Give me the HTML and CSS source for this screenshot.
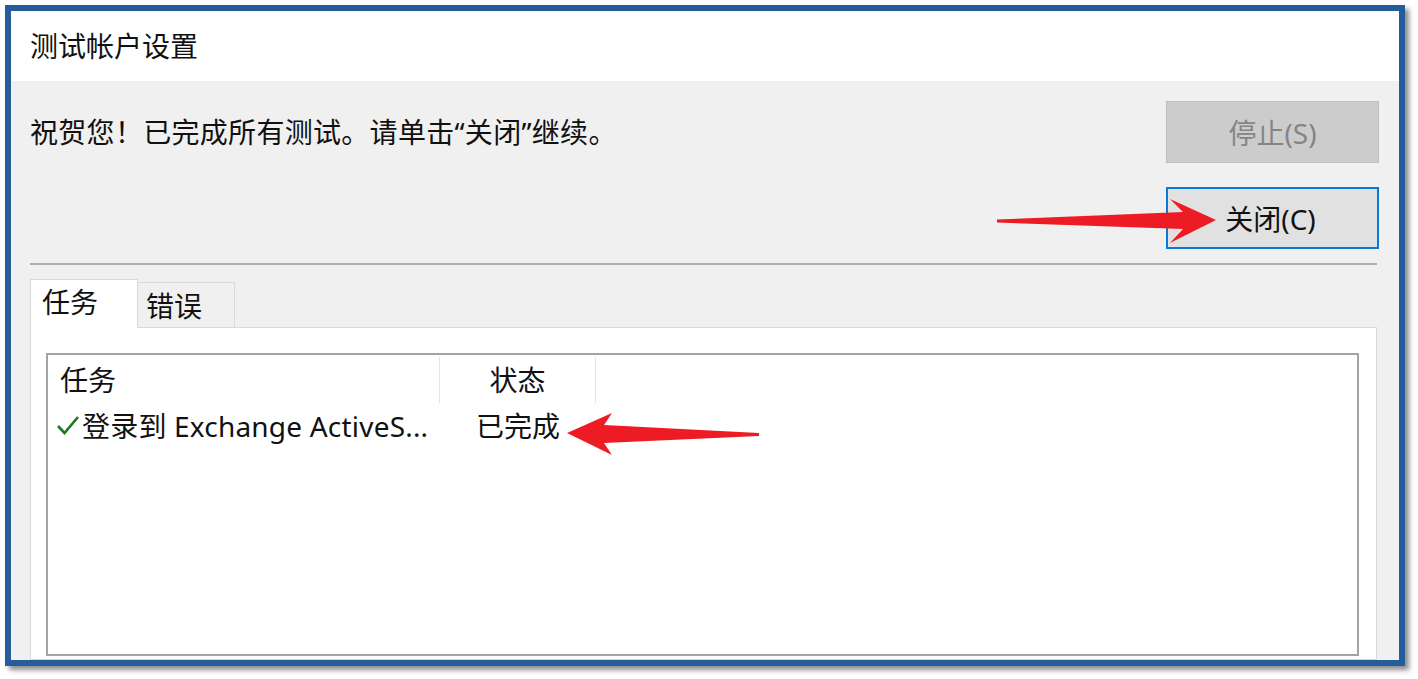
FILE: index.html
```html
<!DOCTYPE html>
<html lang="zh-CN">
<head>
    <meta charset="UTF-8">
    <meta name="viewport" content="width=device-width, initial-scale=1.0">
    <title>测试帐户设置</title>
    <link rel="stylesheet" href="styles.css">
</head>
<body>

    <div class="window">
        <div class="titlebar">测试帐户设置</div>

        <div class="content">
            <div class="top">
                <p class="message">祝贺您！已完成所有测试。请单击“关闭”继续。</p>
                <div class="buttons">
                    <button class="btn btn-disabled">停止(S)</button>
                    <button class="btn btn-default">关闭(C)</button>
                </div>
            </div>

            <div class="divider"></div>

            <div class="tabs">
                <div class="tab active">任务</div>
                <div class="tab">错误</div>
            </div>

            <div class="panel">
                <div class="list">
                    <div class="list-head">
                        <div class="col col-task">任务</div>
                        <div class="col col-status">状态</div>
                    </div>
                    <div class="list-row">
                        <div class="col col-task">
                            <svg class="check" width="24" height="22" viewBox="0 0 24 22">
                                <path d="M2 12 L8.5 19 L22 3" fill="none" stroke="#1b7a1b" stroke-width="2.6"/>
                            </svg>
                            <span class="task-name">登录到 Exchange ActiveS...</span>
                        </div>
                        <div class="col col-status">已完成</div>
                    </div>
                </div>
            </div>
        </div>
    </div>

    <!-- red callout arrows drawn over the screenshot -->
    <svg class="annotations" width="1418" height="679" viewBox="0 0 1418 679">
        <polygon points="997,219.5 1183,212 1170,199 1216,220 1170,243 1183,229 997,222.5" fill="#ed1c24"/>
        <polygon points="759,433 604,425 612,413 567,433 612,455 604,443 759,436" fill="#ed1c24"/>
    </svg>

</body>
</html>
```

FILE: styles.css
```css
* {
    box-sizing: border-box;
    margin: 0;
    padding: 0;
}

body {
    position: relative;
    width: 1418px;
    height: 679px;
    background: #fff;
    font-family: "Noto Sans", "Noto Sans CJK SC", sans-serif;
    font-size: 28px;
    color: #111;
    overflow: hidden;
}

.window {
    margin: 5px;
    width: 1400px;
    height: 661px;
    border: 6px solid #235e9b;
    box-shadow: 4px 4px 5px rgba(0, 0, 0, 0.45);
    display: flex;
    flex-direction: column;
    overflow: hidden;
}

.titlebar {
    height: 70px;
    line-height: 70px;
    padding-left: 19px;
    background: #fff;
    flex-shrink: 0;
}

.content {
    flex: 1;
    display: flex;
    flex-direction: column;
    background: #f0f0f0;
    padding: 20px 19px 0 19px;
    min-height: 0;
}

/* Message + buttons */
.top {
    display: flex;
    justify-content: space-between;
    align-items: flex-start;
}

.message {
    line-height: 62px;
    letter-spacing: 0.3px;
}

.buttons {
    display: flex;
    flex-direction: column;
    gap: 24px;
    margin-right: 1px;
}

.btn {
    width: 213px;
    height: 62px;
    font-family: inherit;
    font-size: 28px;
    cursor: pointer;
}

.btn-disabled {
    background: #cccccc;
    border: 1px solid #bfbfbf;
    color: #858585;
}

.btn-default {
    background: #e1e1e1;
    border: 2px solid #0a78d7;
    color: #111;
    padding-right: 4px;
}

.divider {
    margin: 14px 3px 0 0;
    border-top: 2px solid #adadad;
}

/* Tabs */
.tabs {
    display: flex;
    align-items: flex-end;
    margin-top: 14px;
}

.tab {
    width: 98px;
    height: 45px;
    margin-left: -1px;
    padding-left: 8px;
    line-height: 46px;
    background: #f0f0f0;
    border: 1px solid #d9d9d9;
    border-bottom: none;
}

.tab.active {
    position: relative;
    z-index: 1;
    width: 108px;
    height: 49px;
    margin-left: 0;
    margin-bottom: -1px;
    padding-left: 11px;
    line-height: 44px;
    background: #fff;
}

.panel {
    flex: 1;
    margin-right: 3px;
    background: #fff;
    border: 1px solid #d9d9d9;
    padding: 25px 17px 0 15px;
}

/* Task list */
.list {
    height: 303px;
    border: 2px solid #a2a4aa;
    background: #fff;
}

.list-head,
.list-row {
    display: flex;
}

.list-head {
    height: 50px;
    align-items: center;
}

.list-head .col {
    height: 46px;
    line-height: 46px;
    border-right: 1px solid #e5e5e5;
}

.list-row {
    height: 40px;
    align-items: center;
}

.col-task {
    width: 392px;
    padding-left: 12px;
}

.col-status {
    width: 156px;
    text-align: center;
}

.list-row .col-task {
    display: flex;
    align-items: center;
    padding-left: 8px;
    white-space: nowrap;
}

.task-name {
    letter-spacing: 0.2px;
}

.check {
    flex-shrink: 0;
    margin-right: 2px;
}

.annotations {
    position: absolute;
    top: 0;
    left: 0;
    pointer-events: none;
}
```
